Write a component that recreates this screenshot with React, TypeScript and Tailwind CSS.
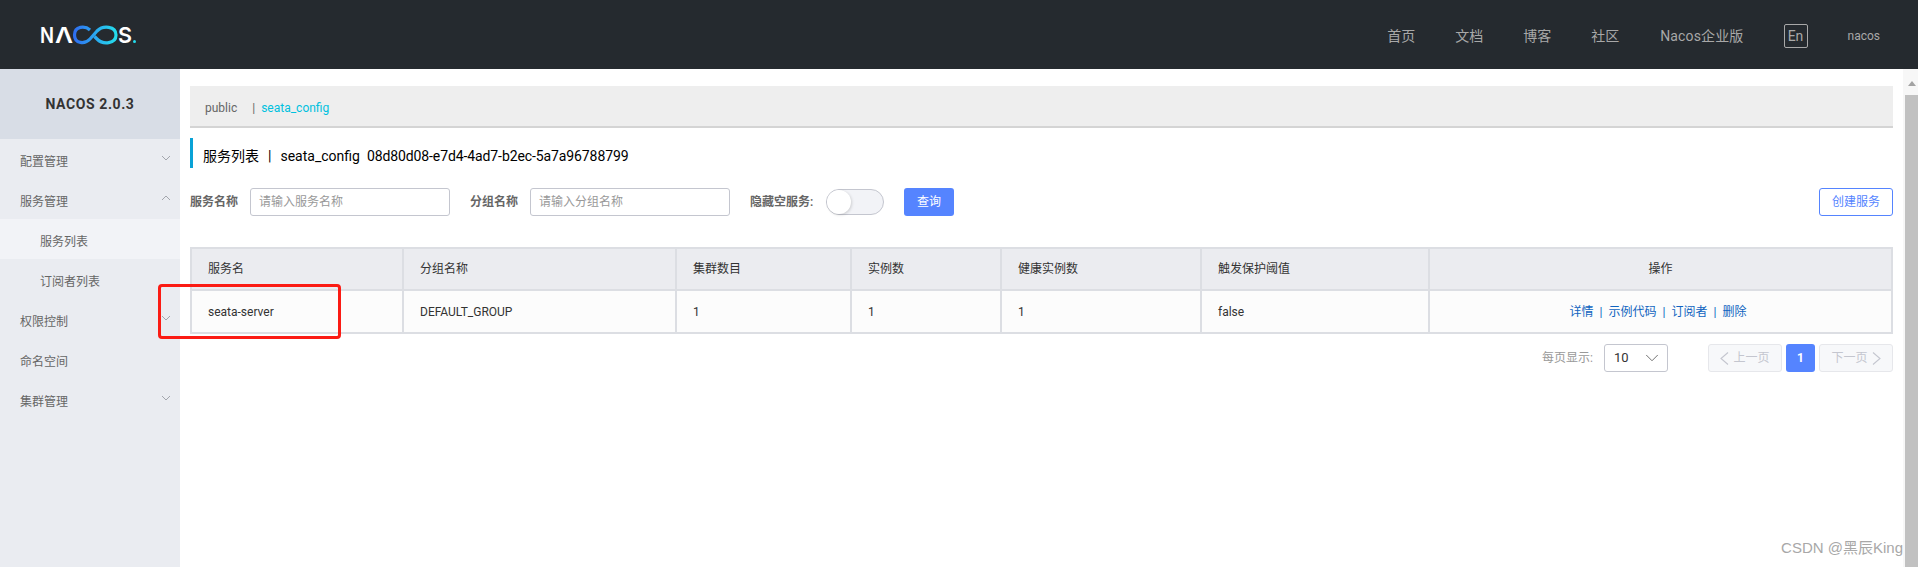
import { ChevronDown } from "lucide-react"

const navItems = [
  { label: "首页", cls: "ml-0" },
  { label: "文档", cls: "ml-10" },
  { label: "博客", cls: "ml-10" },
  { label: "社区", cls: "ml-10" },
  { label: "Nacos企业版", cls: "ml-[41px] tracking-[0.15px]" },
]

function Chevron({ up }: { up?: boolean }) {
  return (
    <svg width="10" height="6" viewBox="0 0 10 6" className={up ? "rotate-180" : ""}>
      <path d="M1 1 L5 5 L9 1" fill="none" stroke="#a3a6ad" strokeWidth="1" />
    </svg>
  )
}

function PageArrow({ right }: { right?: boolean }) {
  return (
    <svg width="9" height="13" viewBox="0 0 9 13" className={right ? "rotate-180" : ""}>
      <path d="M8 0.5 L1 6.5 L8 12.5" fill="none" stroke="#c4c6cf" strokeWidth="1.1" />
    </svg>
  )
}

function MenuItem({ label, open, chevron }: { label: string; open?: boolean; chevron?: boolean }) {
  return (
    <div className="flex h-10 items-center justify-between pl-5 pr-[9px] text-xs text-[#666]">
      <span className="pt-[5px]">{label}</span>
      {chevron && (
        <span className="-mt-[2px]">
          <Chevron up={open} />
        </span>
      )}
    </div>
  )
}

function Logo() {
  return (
    <svg width="100" height="30" viewBox="0 0 100 30" className="block">
      <defs>
        <linearGradient id="loop" x1="0" y1="0" x2="1" y2="0">
          <stop offset="0" stopColor="#2f6ff0" />
          <stop offset="0.5" stopColor="#2aa8f0" />
          <stop offset="1" stopColor="#24dcec" />
        </linearGradient>
      </defs>
      <text x="0" y="22" fontFamily="Inter" fontWeight="600" fontSize="22" fill="#fff" textLength="14" lengthAdjust="spacingAndGlyphs">N</text>
      <text x="15" y="22" fontFamily="Inter" fontWeight="600" fontSize="22" fill="#fff" textLength="18" lengthAdjust="spacingAndGlyphs">Λ</text>
      <g transform="translate(0 4)">
        <path
          d="M50 5 C45 0.5 34.5 1 34.5 10 C34.5 19 45 19.5 50 14 L57 6 C63 0 76 1 76 10 C76 19 63 20 57 14 L54.5 11.5"
          fill="none"
          stroke="url(#loop)"
          strokeWidth="3.2"
        />
      </g>
      <text x="78" y="22" fontFamily="Inter" fontWeight="600" fontSize="22" fill="#fff" textLength="14" lengthAdjust="spacingAndGlyphs">S</text>
      <rect x="93" y="19" width="3" height="3" rx="1.5" fill="#24dcec" />
    </svg>
  )
}

function SearchField({ label, placeholder }: { label: string; placeholder: string }) {
  return (
    <div className="flex items-center">
      <span className="w-[60px] text-xs font-semibold text-[#666]">{label}</span>
      <div className="flex h-7 w-[200px] items-center rounded-[3px] border border-[#c4c6cf] bg-white pl-[8px] text-xs text-[#999]">
        {placeholder}
      </div>
    </div>
  )
}

const columns = [
  { title: "服务名", value: "seata-server", w: "w-[212px]" },
  { title: "分组名称", value: "DEFAULT_GROUP", w: "w-[273px]" },
  { title: "集群数目", value: "1", w: "w-[175px]" },
  { title: "实例数", value: "1", w: "w-[150px]" },
  { title: "健康实例数", value: "1", w: "w-[200px]" },
  { title: "触发保护阈值", value: "false", w: "w-[228px]" },
]

export default function App() {
  return (
    <div className="relative flex h-[567px] w-[1918px] flex-col overflow-hidden bg-white font-['Roboto','Noto_Sans_CJK_SC',sans-serif]">
      {/* Header */}
      <header className="flex h-[69px] shrink-0 items-center border-t-[3px] border-[#5c5f62] bg-[#252a2f] pl-10 pr-[38px] [border-image:linear-gradient(to_bottom,#252a2f_66%,#5c5f62_66%)_1]">
        <Logo />
        <nav className="ml-auto flex items-center text-sm text-[#a8a8a8]">
          {navItems.map((item) => (
            <a key={item.label} className={item.cls}>
              {item.label}
            </a>
          ))}
          <span className="ml-10 flex h-6 w-6 items-center justify-center rounded-[2px] border border-[#a8a8a8]">
            En
          </span>
          <span className="ml-10 text-xs">nacos</span>
        </nav>
      </header>

      <div className="flex min-h-0 flex-1">
        {/* Sidebar */}
        <aside className="w-[180px] shrink-0 bg-[#eaecf1]">
          <div className="flex h-[70px] items-center justify-center bg-[#d8dde6] text-sm font-bold tracking-[0.6px] text-[#333]">
            NACOS 2.0.3
          </div>
          <MenuItem label="配置管理" chevron />
          <MenuItem label="服务管理" chevron open />
          <div className="flex h-10 items-center bg-[#f2f3f7] pl-10 text-xs text-[#666]">
            <span className="pt-[5px]">服务列表</span>
          </div>
          <div className="flex h-10 items-center pl-10 text-xs text-[#666]">
            <span className="pt-[5px]">订阅者列表</span>
          </div>
          <MenuItem label="权限控制" chevron />
          <MenuItem label="命名空间" />
          <MenuItem label="集群管理" chevron />
        </aside>

        {/* Content */}
        <main className="min-w-0 flex-1 px-[10px] pt-[17px]">
          <div className="flex h-[42px] items-center border-b-[2px] border-[#d4d4d4] bg-[#eee] pl-[15px] pt-1 text-xs">
            <span className="text-[#666]">public</span>
            <span className="ml-[15px] text-[#666]">|</span>
            <span className="ml-[6px] text-[#00c1de]">seata_config</span>
          </div>

          <div className="mt-[10px] flex h-[30px] items-center border-l-[3px] border-[#09a2d6] pl-[10px] pt-[6px] text-sm text-black">
            <span>服务列表</span>
            <span className="mx-[9px]">|</span>
            <span>seata_config</span>
            <span className="ml-[7px] tracking-[-0.1px]">08d80d08-e7d4-4ad7-b2ec-5a7a96788799</span>
          </div>

          <div className="mt-5 flex h-7 items-center">
            <SearchField label="服务名称" placeholder="请输入服务名称" />
            <div className="ml-5">
              <SearchField label="分组名称" placeholder="请输入分组名称" />
            </div>
            <span className="ml-5 w-[76px] text-xs font-semibold text-[#666]">隐藏空服务:</span>
            <div className="flex h-[26px] w-[58px] items-center rounded-full border border-[#c4c6cf] bg-[#f2f3f7]">
              <div className="h-6 w-6 rounded-full bg-white shadow-[1px_1px_3px_rgba(0,0,0,0.15)]" />
            </div>
            <button className="ml-5 h-7 w-[50px] rounded-[3px] bg-[#5584ff] text-xs text-white">查询</button>
            <button className="ml-auto h-7 w-[74px] rounded-[3px] border border-[#5584ff] bg-white text-xs text-[#5584ff]">
              创建服务
            </button>
          </div>

          <table className="mt-[31px] w-[1703px] table-fixed border-collapse text-xs">
            <thead>
              <tr className="h-[42px] bg-[#ebecf0] text-[#333]">
                {columns.map((c) => (
                  <th key={c.title} className={`${c.w} border-2 border-[#dcdee3] pl-4 text-left font-normal`}>
                    {c.title}
                  </th>
                ))}
                <th className="border-2 border-[#dcdee3] text-center font-normal">操作</th>
              </tr>
            </thead>
            <tbody>
              <tr className="h-[43px] bg-[#fcfcfc] text-[#333]">
                {columns.map((c) => (
                  <td key={c.title} className="border-2 border-[#dcdee3] pl-4">
                    {c.value}
                  </td>
                ))}
                <td className="border-2 border-[#dcdee3] pr-[5px] text-center text-[#1064c0]">
                  详情<span className="mx-[6px]">|</span>示例代码<span className="mx-[6px]">|</span>订阅者
                  <span className="mx-[6px]">|</span>删除
                </td>
              </tr>
            </tbody>
          </table>

          <div className="mt-[10px] flex h-7 items-center justify-end text-xs">
            <span className="text-[#999]">每页显示:</span>
            <div className="ml-[11px] flex h-7 w-16 items-center justify-between rounded-[3px] border border-[#c4c6cf] pl-[9px] pr-[4px] text-[13px] text-[#333]">
              <span>10</span>
              <ChevronDown size={22} strokeWidth={1} className="text-[#666]" />
            </div>
            <button className="ml-10 flex h-7 w-[74px] items-center justify-center gap-1 rounded-[3px] border border-[#e6e7eb] bg-[#f7f8fa] text-[#c4c6cf]">
              <PageArrow />
              上一页
            </button>
            <button className="ml-1 h-7 w-[29px] rounded-[3px] bg-[#5584ff] font-bold text-white">1</button>
            <button className="ml-1 flex h-7 w-[74px] items-center justify-center gap-1 rounded-[3px] border border-[#e6e7eb] bg-[#f7f8fa] text-[#c4c6cf]">
              下一页
              <PageArrow right />
            </button>
          </div>
        </main>

        {/* Scrollbar */}
        <div className="flex w-[15px] shrink-0 flex-col items-end bg-[#f7f7f7]">
          <div className="flex h-[26px] w-[13px] items-center justify-center pt-[2px]">
            <svg width="8" height="5" viewBox="0 0 8 5">
              <path d="M4 0 L8 5 L0 5 Z" fill="#a3a3a3" />
            </svg>
          </div>
          <div className="w-[13px] flex-1 bg-[#c1c1c1]" />
        </div>
      </div>

      {/* Annotation drawn over the screenshot */}
      <div className="absolute left-[158px] top-[284px] h-[55px] w-[183px] rounded-[4px] border-[3px] border-[#fb1b14]" />
      <div className="absolute bottom-[8px] right-[15px] font-['Liberation_Sans','Noto_Sans_CJK_SC',sans-serif] text-[15px] text-[#a8a8a8]">
        CSDN @黑辰King
      </div>
    </div>
  )
}
